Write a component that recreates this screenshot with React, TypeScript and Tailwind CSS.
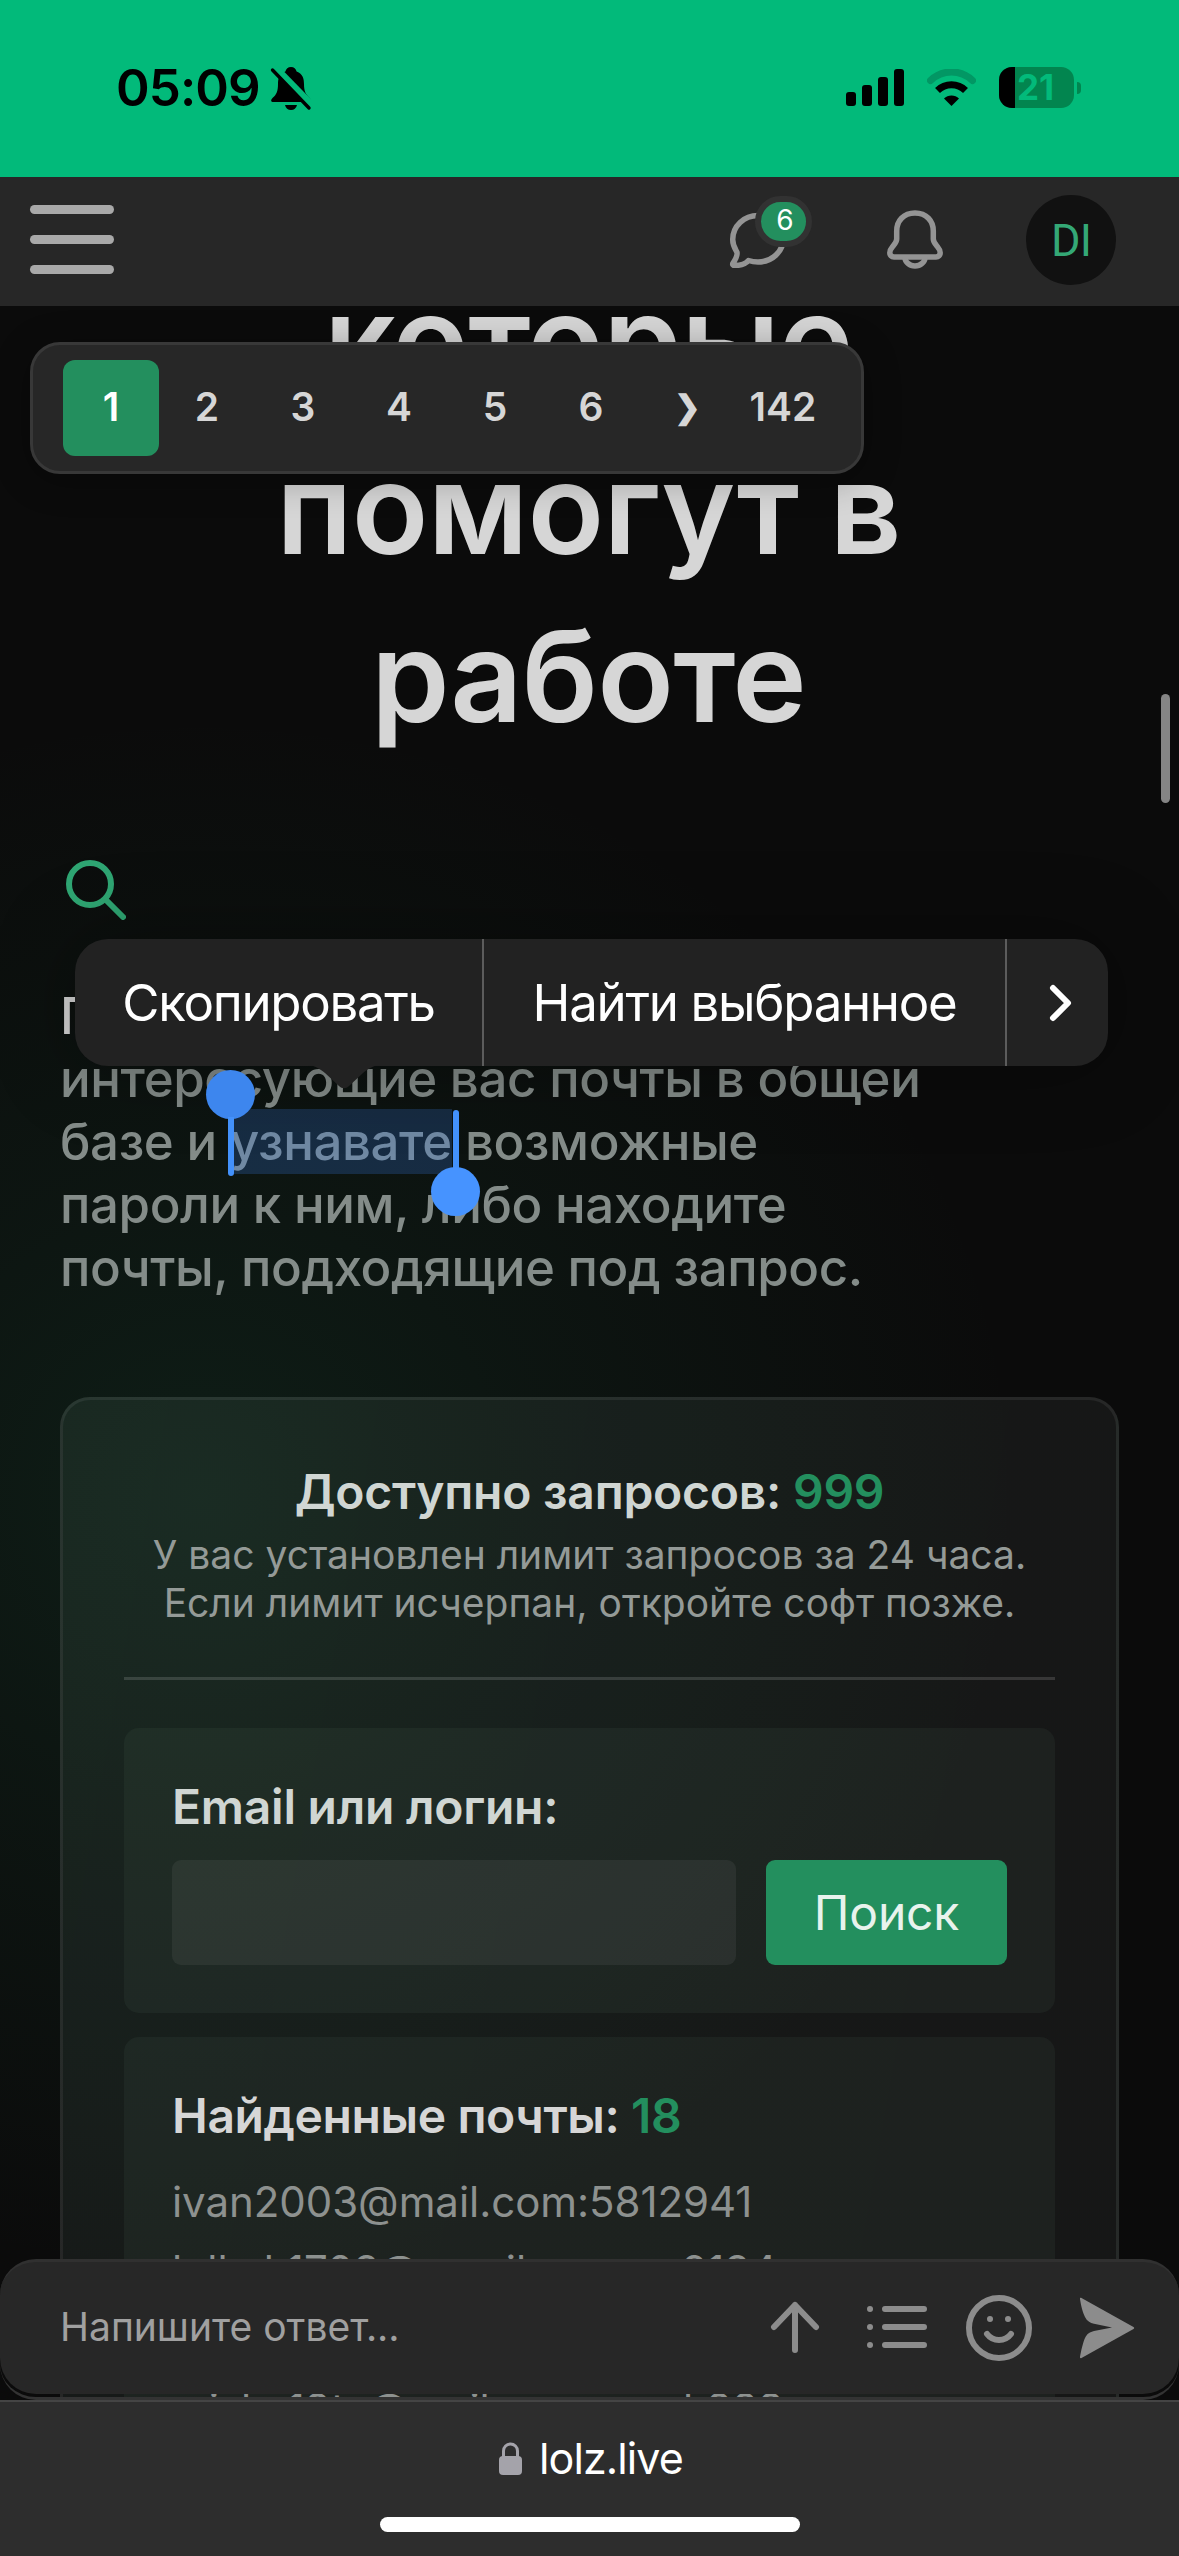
const PAGES = ["2", "3", "4", "5", "6"];

const MAILS = [
  "ivan2003@mail.com:5812941",
  "lolkek1703@gmail.com:as2134",
  "petr.sm@mail.com:qwerty",
  "misha19ta@mail.com:esmk888",
];

function StatusBar() {
  return (
    <div className="flex h-[177px] shrink-0 items-start bg-[#02ba7a] pt-[58px] pl-[116px] pr-[98px]">
      <span className="text-[51px] leading-[60px] font-semibold tracking-[-0.9px] text-black">05:09</span>
      <svg className="ml-[10px] mt-[8px] h-[45px] w-[42px]" viewBox="0 0 42 45" fill="none">
        <path d="M21 1c-3 0-5 1.800-5.600 4.500C9 8 8 13 8 18c0 7-1.500 11-5.500 14C0 34.500 1.500 36 3 36h36c1.500 0 3-1.500.500-4C35.500 28 34 25 34 18c0-5-1-10-7.400-12.500C26 2.800 24 1 21 1z" fill="#000" />
        <path d="M15 39h12c-.600 3-3 5-6 5s-5.400-2-6-5z" fill="#000" />
        <path d="M4.500 1.500 42 40" stroke="#02ba7a" strokeWidth="8" />
        <path d="M2.500 4 39 42" stroke="#000" strokeWidth="3.400" strokeLinecap="round" />
      </svg>
      <div className="mt-[9px] ml-auto flex items-start">
        <svg className="mt-[2px] h-[37px] w-[58px]" viewBox="0 0 58 37">
          <rect x="0" y="23" width="10" height="14" rx="3" />
          <rect x="16" y="16" width="10" height="21" rx="3" />
          <rect x="32" y="8" width="10" height="29" rx="3" />
          <rect x="48" y="0" width="10" height="37" rx="3" />
        </svg>
        <svg className="mt-[2px] ml-[23px] h-[37px] w-[49px]" viewBox="0 0 49 37" fill="none">
          <path d="M3.500 11.500a30 30 0 0 1 42 0" stroke="#029764" strokeWidth="7" strokeLinecap="round" />
          <path d="M10.500 21.500a20 20 0 0 1 28 0" stroke="#000" strokeWidth="7" />
          <path d="M24.500 37 17 29.500a10.600 10.600 0 0 1 15 0z" fill="#000" />
        </svg>
        <div className="ml-[23px] flex h-[41px] w-[75px] items-center overflow-hidden rounded-[13px] bg-[#02854f]">
          <div className="h-full w-[16px] bg-black" />
          <span className="ml-[2px] text-[35px] leading-none font-bold text-[#02ba7a]">21</span>
        </div>
        <div className="mt-[15px] ml-[3px] h-[12px] w-[4px] rounded-r-full bg-[#02854f]" />
      </div>
    </div>
  );
}

function Header() {
  return (
    <header className="flex h-[129px] shrink-0 items-center bg-[#272727] pr-[63px] pl-[30px]">
      <div className="-mt-[5px] flex flex-col gap-[21px]">
        <span className="h-[9px] w-[84px] rounded-full bg-[#a9a9a9]" />
        <span className="h-[9px] w-[84px] rounded-full bg-[#a9a9a9]" />
        <span className="h-[9px] w-[84px] rounded-full bg-[#a9a9a9]" />
      </div>
      <div className="relative -mt-[6px] ml-auto h-[58px] w-[60px]">
        <svg className="h-[58px] w-[60px]" viewBox="0 0 60 58" fill="none" stroke="#949494" strokeWidth="5.500" strokeLinejoin="round">
          <path d="M30 5.500C16 5.500 4.700 16 4.700 29.500c0 6 2.200 9 4.200 12.500.8 3-.8 6.500-3.800 11-1 1.600 0 2.700 1.800 2.600 6.500-.3 11-2 13.600-5.100 3 1 6 1.500 9.500 1.500 14 0 25.300-10.500 25.300-23.500S44 5.500 30 5.500z" />
        </svg>
        <span className="absolute -top-[14px] left-[27px] flex h-[51px] w-[57px] items-center justify-center rounded-full border-[6px] border-[#323232] bg-[#238f5e] pb-[3px] pl-[3px] text-[28px] leading-none text-white">
          6
        </span>
      </div>
      <svg className="-mt-[6px] ml-[98px] h-[60px] w-[58px]" viewBox="0 0 58 60" fill="none" stroke="#949494" strokeWidth="5.500" strokeLinejoin="round">
        <path d="M29 4C17.500 4 10.700 12 10.700 22v8c0 3-1.500 4.500-4 7.500-2 2.300-2.900 4-2.900 6.300 0 2.500 1.700 4.200 4.200 4.200h42c2.500 0 4.200-1.700 4.200-4.200 0-2.300-.9-4-2.900-6.300-2.500-3-4-4.500-4-7.500v-8C47.300 12 40.500 4 29 4z" />
        <path d="M19 48.500c0 4.500 4.500 8.500 10 8.500s10-4 10-8.500" />
      </svg>
      <div className="-mt-[3px] ml-[82px] flex size-[90px] items-center justify-center rounded-full bg-[#111111] pt-[2px] font-[Roboto,sans-serif] text-[45px] tracking-[-1px] text-[#34a876]">
        DI
      </div>
    </header>
  );
}

function Pager() {
  return (
    <nav className="absolute top-[342px] left-[30px] flex h-[132px] w-[834px] items-center rounded-[30px] border-[3px] border-[#383838] bg-[#272727] pl-[30px] text-[39px] font-semibold text-[#d6d6d6] shadow-[0_6px_36px_rgba(0,0,0,0.3)]">
      <span className="flex size-[96px] items-center justify-center rounded-[12px] bg-[#238f5e] pb-[2px] text-white">1</span>
      {PAGES.map((page) => (
        <span key={page} className="w-[96px] pb-[2px] text-center">
          {page}
        </span>
      ))}
      <span className="w-[96px] pb-[2px] text-center text-[32px]">❯</span>
      <span className="w-[96px] pb-[2px] text-center">142</span>
    </nav>
  );
}

function SelectionMenu() {
  return (
    <div className="absolute top-[939px] left-[75px] flex h-[127px] w-[1033px] rounded-[33px] bg-[#222222] text-[51px] leading-[127px] tracking-[-1.3px] text-white shadow-[0_0_80px_rgba(0,0,0,0.35)]">
      <span className="w-[409px] border-r-[2px] border-[#5c5c5c] text-center whitespace-nowrap">Скопировать</span>
      <span className="w-[523px] border-r-[2px] border-[#5c5c5c] text-center whitespace-nowrap">Найти выбранное</span>
      <span className="flex flex-1 items-center justify-center pl-[6px]">
        <svg className="h-[38px] w-[24px]" viewBox="0 0 24 38" fill="none" stroke="#fff" strokeWidth="6" strokeLinecap="round" strokeLinejoin="round">
          <path d="M4 4l15 15L4 34" />
        </svg>
      </span>
      <svg className="absolute top-[126px] left-[233px] h-[25px] w-[72px]" viewBox="0 0 72 25" fill="#222222">
        <path d="M0 0h72c-8 1-12 4-17 8L41 21c-3 3-7 3-10 0L17 8C12 4 8 1 0 0z" />
      </svg>
    </div>
  );
}

function QueryCard() {
  return (
    <section className="mt-[98px] ml-[60px] h-[1200px] w-[1059px] rounded-[30px] border-[3px] border-white/7 bg-[linear-gradient(100deg,rgba(190,255,225,0.065),rgba(220,255,240,0.055)_50%,rgba(240,255,248,0.05))] px-[61px] pt-[60px]">
      <h2 className="text-center text-[48px] leading-[63px] font-semibold tracking-[-0.25px] text-[#d0d6d3]">
        Доступно запросов: <span className="text-[#238f5e]">999</span>
      </h2>
      <p className="mt-[8px] text-center text-[39px] leading-[48px] whitespace-nowrap text-[#949a97]">
        У вас установлен лимит запросов за 24 часа.
        <br />
        Если лимит исчерпан, откройте софт позже.
      </p>
      <div className="mt-[50px] h-[3px] bg-white/14" />
      <div className="mt-[48px] rounded-[15px] bg-[#7fb093]/7 px-[48px] pt-[47px] pb-[48px]">
        <h3 className="text-[48px] leading-[63px] font-semibold tracking-[-0.25px] text-[#d0d6d3]">Email или логин:</h3>
        <div className="mt-[22px] flex gap-[30px]">
          <div className="h-[105px] w-[564px] rounded-[9px] bg-white/6" />
          <button type="button" className="h-[105px] flex-1 rounded-[9px] bg-[#238f5e] text-[48px] tracking-[-0.2px] text-[#e8f3ed]">
            Поиск
          </button>
        </div>
      </div>
      <div className="mt-[24px] h-[700px] rounded-[15px] bg-[#7fb093]/7 px-[48px] pt-[47px]">
        <h3 className="text-[48px] leading-[63px] font-semibold tracking-[-0.4px] text-[#d6d6d6]">
          Найденные почты: <span className="text-[#238f5e]">18</span>
        </h3>
        <ul className="mt-[20px] text-[42px] leading-[69px] tracking-[-0.05px] text-[#8d918f]">
          {MAILS.map((mail) => (
            <li key={mail}>{mail}</li>
          ))}
        </ul>
      </div>
    </section>
  );
}

function ReplyBar() {
  return (
    <>
      <div className="absolute top-[2259px] left-0 h-[141px] w-full rounded-[36px] border-b-[3px] border-[#333333]" />
      <div className="absolute top-[2259px] left-0 flex h-[135px] w-full items-center rounded-[36px] border-t-[3px] border-[#303030] bg-[#272727] pr-[44px] pl-[60px]">
        <span className="pb-[2px] text-[39px] text-[#a0a0a0]">Напишите ответ...</span>
        <svg className="ml-auto size-[54px]" viewBox="0 0 54 54" fill="none" stroke="#8c8c8c" strokeWidth="6" strokeLinecap="round" strokeLinejoin="round">
          <path d="M27 49V4M6 26 27 4l21 22" />
        </svg>
        <svg className="ml-[45px] h-[48px] w-[60px]" viewBox="0 0 60 48" fill="none" stroke="#8c8c8c" strokeWidth="6" strokeLinecap="round">
          <path d="M3 5h.01M3 23h.01M3 41h.01M18 5h39M18 23h39M18 41h39" />
        </svg>
        <svg className="ml-[39px] size-[66px]" viewBox="0 0 66 66" fill="none" stroke="#8c8c8c" strokeWidth="6" strokeLinecap="round">
          <circle cx="33" cy="33" r="30" />
          <path d="M24 24h.01M42 24h.01M21 39c6 8 18 8 24 0" />
        </svg>
        <svg className="ml-[47px] h-[62px] w-[56px]" viewBox="0 0 56 62" fill="#8c8c8c">
          <path d="M2.500 1C1.500.5.800 1 1 2c1 7 3 14 5 18 2 4 5 6 9 6.800L33 30.500 15 34c-4 1-7 2.500-9 7C4 45.500 2 54 1 60c-.2 1 .5 1.500 1.500 1l52-29c.9-.6.9-1.400 0-2z" />
        </svg>
      </div>
    </>
  );
}

function BrowserBar() {
  return (
    <footer className="relative flex h-[156px] shrink-0 flex-col items-center border-t-[2px] border-[#444444] bg-[#2d2d2d]">
      <div className="mt-[26px] flex h-[60px] items-center pl-[3px]">
        <svg className="h-[33px] w-[23px]" viewBox="0 0 23 33">
          <rect x="0" y="14" width="23" height="19" rx="4" fill="#a4a3aa" />
          <path d="M4.500 15V9a7 7 0 0 1 14 0v6" fill="none" stroke="#a4a3aa" strokeWidth="3" />
        </svg>
        <span className="ml-[17px] text-[43px] leading-[60px] tracking-[-0.9px] text-white">lolz.live</span>
      </div>
      <div className="mt-[29px] h-[15px] w-[420px] rounded-full bg-white" />
    </footer>
  );
}

export default function App() {
  return (
    <div className="relative flex h-[2556px] w-[1179px] flex-col overflow-hidden bg-[#0b0b0b] font-[Inter,'Noto_Sans',sans-serif]">
      <StatusBar />
      <Header />
      <main className="min-h-0 flex-1 overflow-hidden bg-[radial-gradient(ellipse_820px_780px_at_200px_1190px,rgba(35,143,94,0.14),rgba(35,143,94,0.08)_40%,transparent)]">
        <h1 className="-mt-[50px] pr-[2px] text-center text-[126px] leading-[168px] font-semibold tracking-[-0.7px] text-[#d6d6d6]">
          которые
          <br />
          помогут в
          <br />
          работе
        </h1>
        <svg className="mt-[100px] ml-[66px] size-[60px]" viewBox="0 0 60 60" fill="none" stroke="#2fa673" strokeWidth="6" strokeLinecap="round">
          <circle cx="24" cy="24" r="21" />
          <path d="M39.500 39.500 57 57" />
        </svg>
        <div className="mt-[64px] ml-[60px] text-[51px] leading-[63px] font-medium tracking-[-0.42px] whitespace-nowrap">
          <h2 className="text-[#d6d6d6]">Поиск</h2>
          <p className="text-[#848c89]">
            интересующие вас почты в общей
            <br />
            базе и <span className="bg-[#3b82f6]/22 py-[2px] text-[#7089a3]">узнавате</span> возможные
            <br />
            пароли к ним, либо находите
            <br />
            почты, подходящие под запрос.
          </p>
        </div>
        <QueryCard />
      </main>
      <BrowserBar />
      <Pager />
      <SelectionMenu />
      {/* selection handles */}
      <div className="absolute top-[1070px] left-[206px] flex w-[49px] flex-col items-center">
        <div className="size-[49px] rounded-full bg-[#3d86ee]" />
        <div className="-mt-[2px] h-[59px] w-[6px] rounded-b-full bg-[#4391fb]" />
      </div>
      <div className="absolute top-[1110px] left-[431px] flex w-[49px] flex-col items-center">
        <div className="h-[59px] w-[6px] rounded-t-full bg-[#4391fb]" />
        <div className="-mt-[2px] size-[49px] rounded-full bg-[#4693ff]" />
      </div>
      <ReplyBar />
      <div className="absolute top-[694px] left-[1161px] h-[109px] w-[9px] rounded-full bg-[#858585]" />
    </div>
  );
}
